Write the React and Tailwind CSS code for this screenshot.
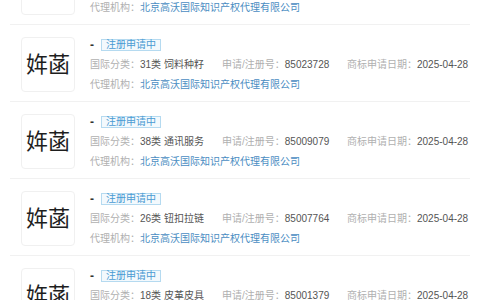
const items = [
  { cls: '31类 饲料种籽', no: '85023728', date: '2025-04-28' },
  { cls: '31类 饲料种籽', no: '85023728', date: '2025-04-28' },
  { cls: '38类 通讯服务', no: '85009079', date: '2025-04-28' },
  { cls: '26类 钮扣拉链', no: '85007764', date: '2025-04-28' },
  { cls: '18类 皮革皮具', no: '85001379', date: '2025-04-28' },
];

const font = { fontFamily: '"Liberation Sans", "Noto Sans CJK SC", sans-serif' };

function Row({ item }) {
  return (
    <div className="mx-[10px] flex h-[77px] border-b border-[#f1f1f1] pt-[12px] pl-[11px]">
      {/* logo */}
      <div className="flex h-[55px] w-[54px] shrink-0 items-center justify-center rounded-[4px] border border-[#f0f0f0] bg-white">
        <span className="text-[22px] leading-none text-[#1e1e1e]">姩菡</span>
      </div>

      <div className="ml-[15px] flex flex-col text-[10px] leading-none">
        <div className="flex h-[12px] items-center mt-[2px]">
          <span className="w-[11px] text-[12px] font-bold text-[#333]">-</span>
          <span className="flex h-[12px] items-center border border-[#b5daf0] bg-[#f3f9fd] px-[4px] text-[#4a9bd3]">
            注册申请中
          </span>
        </div>
        <div className="mt-[9px] flex h-[10px] items-center whitespace-nowrap">
          <div className="w-[132px]">
            <span className="text-[#b0b0b0]">国际分类：</span>
            <span className="text-[#555]">{item.cls}</span>
          </div>
          <div className="w-[125px]">
            <span className="text-[#b0b0b0]">申请/注册号：</span>
            <span className="text-[#555]">{item.no}</span>
          </div>
          <div>
            <span className="text-[#b0b0b0]">商标申请日期：</span>
            <span className="text-[#555]">{item.date}</span>
          </div>
        </div>
        <div className="mt-[10px] flex h-[10px] items-center whitespace-nowrap">
          <span className="text-[#b0b0b0]">代理机构：</span>
          <span className="text-[#4a8dc2]">北京高沃国际知识产权代理有限公司</span>
        </div>
      </div>
    </div>
  );
}

export default function App() {
  return (
    <div className="h-[300px] w-[480px] overflow-hidden bg-white" style={font}>
      <div className="-mt-[52px]">
        {items.map((item, i) => (
          <Row key={i} item={item} />
        ))}
      </div>
    </div>
  );
}
